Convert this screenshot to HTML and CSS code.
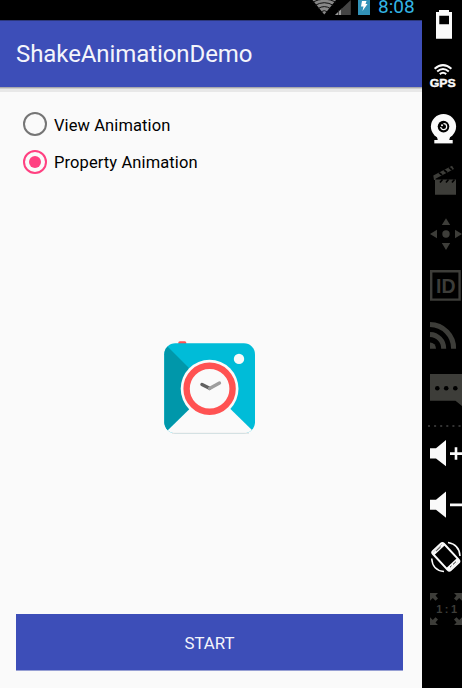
FILE: index.html
```
<!DOCTYPE html>
<html lang="en">
<head>
<meta charset="utf-8">
<title>ShakeAnimationDemo</title>
<link rel="stylesheet" href="styles.css">
</head>
<body>
<div class="emulator">
  <div class="screen">
    <div class="statusbar">
      <svg width="60" height="20" viewBox="312 0 60 20">
        <path d="M312.500 0H336L324.300 14.500Z" fill="#888"/>
        <g fill="none" stroke="#111" stroke-width="1"><path d="M312.500 2.200Q324.300-4 336 2.200M315 5.400Q324.300 0 333.500 5.400M318 8.600Q324.300 4.600 330.500 8.600M321 11.800Q324.300 9.500 327.500 11.800"/></g>
        <path d="M335 15L350.800 0V15Z" fill="#444"/>
        <path d="M335 15L342 8.400V15Z" fill="#999"/>
        <path d="M338.500 10V15M341.500 8V15" stroke="#222" stroke-width=".7"/>
        <path d="M358 0H370V15H358Z" fill="#3292b8"/>
        <path d="M362 1H366.500L365.500 4H367.500L362.500 11L363.500 6.500H361Z" fill="#fff"/>
      </svg>
      <span class="clock">8:08</span>
    </div>
    <header class="appbar"><h1>ShakeAnimationDemo</h1></header>
    <main class="content">
      <div class="radios">
        <div class="radio"><i class="ring"></i><span class="view">View Animation</span></div>
        <div class="radio"><i class="ring on"></i><span class="property">Property Animation</span></div>
      </div>
      <div class="picture">
        <svg width="94" height="96" viewBox="163 340 94 96">
          <defs><clipPath id="tile"><rect x="164.300" y="343.300" width="90.700" height="90" rx="11"/></clipPath></defs>
          <rect x="178.300" y="341.200" width="8" height="5" rx="1.500" fill="#ff5252"/>
          <g clip-path="url(#tile)">
            <path d="M164 343H256V434H164Z" fill="#00bcd8"/>
            <path d="M164 343L210 389L164 434Z" fill="#0097aa"/>
            <path d="M210 389V389L256 434H164Z" fill="#fafafa"/>
          </g>
          <path d="M172 433.300H249" stroke="#d9d9d9" stroke-width=".8"/>
          <circle cx="209.600" cy="388.700" r="28.900" fill="#fafafa"/>
          <circle cx="209.600" cy="388.700" r="23" fill="none" stroke="#ff5252" stroke-width="6.400"/>
          <path d="M202 384.500L209.500 388.300" stroke="#616161" stroke-width="3.500" stroke-linecap="round"/>
          <path d="M209.500 388.500L219.500 383" stroke="#9e9e9e" stroke-width="3.300" stroke-linecap="round"/>
          <circle cx="239" cy="358.900" r="5.200" fill="#fafafa"/>
        </svg>
      </div>
      <button class="start"><span>START</span></button>
    </main>
  </div>
  <aside class="tools">
    <svg width="40" height="50" viewBox="0 0 40 50"><path fill-rule="evenodd" d="M17 10H27V12H30V38.700H14V12H17ZM17.300 15.700V24.300H27V15.700Z"/></svg>
    <svg width="40" height="52" viewBox="0 50 40 52">
      <path class="line" stroke-width="2" d="M12.600 68.800Q21 61.500 29.400 68.800M15.200 71.500Q21 66.500 26.800 71.500M17.800 74.100Q21 71.500 24.200 74.100"/>
      <text x="7.800" y="87.300" class="gps" textLength="26" lengthAdjust="spacingAndGlyphs">GPS</text>
    </svg>
    <svg width="40" height="52" viewBox="0 102 40 52">
      <circle cx="21.500" cy="126.600" r="12.600"/><path d="M15 137H28L27 141H16Z"/><path d="M12.300 140H30.700V143.400H12.300Z"/>
      <circle cx="21.500" cy="126.600" r="5.800" fill="#000"/><path class="line" stroke-width="1.200" d="M18.700 127A3 3 0 1 0 21.500 123.600"/><circle cx="20" cy="125.200" r="1"/>
    </svg>
    <svg class="off" width="40" height="52" viewBox="0 154 40 52">
      <path d="M13 179.500H34V194.700H13ZM11.300 175.500L30 165.800L32 169L13.500 178.800V180H12Z"/>
      <path d="M17 172.600L20 175M22 170L25 172.500M27 167.300L30 170M18 182.500L20.500 179.500M24 182.500L26.500 179.500M30 182.500L32.500 179.500" stroke="#000" stroke-width="1.700"/>
    </svg>
    <svg class="off" width="40" height="54" viewBox="0 206 40 54"><circle cx="24" cy="234" r="3.700"/><path d="M24 218.300L28.200 225H19.800ZM24 250L28.200 243H19.800ZM8 234L15 229.800V238.200ZM40 234L33 229.800V238.200Z"/></svg>
    <svg class="off" width="40" height="50" viewBox="0 260 40 50"><path class="line" stroke-width="2.400" d="M9.200 271.200H37.600V299.600H9.200Z"/><text x="14" y="293.200" class="id" textLength="19.500" lengthAdjust="spacingAndGlyphs">ID</text></svg>
    <svg class="off" width="40" height="52" viewBox="0 310 40 52"><path d="M8 342.500A6 6 0 0 1 14 348.700H8Z"/><path class="line" stroke-width="5" d="M8 334.500A14 14 0 0 1 21.700 348.700M8 324.500A23.800 23.800 0 0 1 31.600 348.700"/></svg>
    <svg class="off" width="40" height="58" viewBox="0 362 40 58"><path d="M8 374H40V406L33.500 400.800H8Z"/><g fill="#000"><circle cx="15.300" cy="388.300" r="2.300"/><circle cx="24.200" cy="388.300" r="2.300"/><circle cx="33.300" cy="388.300" r="2.300"/></g></svg>
    <svg width="40" height="10" viewBox="0 420 40 10"><path d="M6 426H40" fill="none" stroke="#333" stroke-width="2" stroke-dasharray="2 4.100"/></svg>
    <svg width="40" height="50" viewBox="0 430 40 50"><path d="M8 448.300H14L24 440V466.300L14 458.400H8ZM28 452.300H40V455H28ZM32.700 447.300H35.300V459.700H32.700Z"/></svg>
    <svg width="40" height="50" viewBox="0 480 40 50"><path d="M8 499.700H14L24 491.400V517.700L14 509.800H8ZM28 503.400H40V506.300H28Z"/></svg>
    <svg width="40" height="53" viewBox="0 530 40 53">
      <g transform="translate(23.800 556.800) rotate(-43)"><rect x="-7.500" y="-13" width="15" height="26" rx="2.200" class="line" stroke-width="2"/><path d="M-7.500-10.800V-12H7.500V-9H-7.500ZM-7.500 8.500H7.500V12.500H-7.500Z"/><path d="M-3-10.800H3M-4 10.500H-2M0 10.500H4" stroke="#000" stroke-width=".8"/></g>
      <path class="line" stroke-width="1.500" d="M26 542.400Q37.500 544.500 38 556M9.700 558.500Q10.500 570.500 22 571.500"/>
    </svg>
    <svg class="off" width="40" height="105" viewBox="0 583 40 105">
      <path d="M8 593H16L13.500 595.500L16 598.500L13.500 600.800L10.800 598L8 600.800ZM40 593H32L34.500 595.500L32 598.500L34.500 600.800L37.200 598L40 600.800ZM8 625H16L13.500 622.500L16 619.500L13.500 617.200L10.800 620L8 617.200ZM40 625H32L34.500 622.500L32 619.500L34.500 617.200L37.200 620L40 617.200Z"/>
      <text class="ratio" y="612.900"><tspan x="14.200">1</tspan><tspan x="22.800">:</tspan><tspan x="29">1</tspan></text>
    </svg>
  </aside>
</div>
</body>
</html>
```
FILE: styles.css
```
* { box-sizing: border-box; }
body { margin: 0; background: #000; font-family: Roboto, sans-serif; }
.emulator { display: flex; width: 462px; height: 688px; overflow: hidden; }
.screen { width: 422px; display: flex; flex-direction: column; background: #fafafa; }
.statusbar { height: 20px; background: #000; display: flex; justify-content: flex-end; padding-right: 7px; gap: 6px; }
.clock { width: 37px; color: #33b5e5; font-size: 19px; line-height: 13px; letter-spacing: 0; white-space: nowrap; }
.appbar { height: 67px; flex: none; background: #3d4eb8; border-top: 1px solid #2c377c; display: flex; align-items: center; padding-left: 16px; box-shadow: 0 1px 0 #a9a9ad, 0 2px 0 #cdcdcd, 0 5px 0 #e8e8e8; }
h1 { margin: 0; color: #f4f5fb; font-size: 24px; font-weight: 400; line-height: 28px; letter-spacing: -0.08px; }
.content { flex: 1; display: flex; flex-direction: column; align-items: flex-start; padding: 18px 19px 17px 16px; }
.radios { padding-left: 7px; }
.radio { height: 38px; display: flex; align-items: center; gap: 7px; font-size: 16.5px; color: #000; white-space: nowrap; letter-spacing: 0.1px; }
.view { padding-top: 2px; }
.property { padding-top: 1px; }
.ring { width: 24px; height: 24px; border: 2.5px solid #757575; border-radius: 50%; display: grid; place-items: center; }
.ring.on { border-color: #ff4081; }
.ring.on::after { content: ""; width: 12px; height: 12px; border-radius: 50%; background: #ff4081; }
.picture { flex: 1; width: 100%; display: flex; justify-content: center; padding-top: 159px; }
.start { width: 387px; height: 57px; border: 0; border-bottom: 1px solid #98a0d4; background: #3d4eb8; color: #f4f5fb; font: 400 16.8px Roboto, sans-serif; padding: 2px 0 0; }
.tools { width: 40px; background: #000; display: flex; flex-direction: column; }
.tools svg { display: block; flex: none; fill: #fafafa; stroke: none; }
.tools .line { fill: none; stroke: #fafafa; }
.tools .off { fill: #3d3d39; }
.tools .off .line { stroke: #3d3d39; }
.gps { font: bold 11.5px "Liberation Sans", sans-serif; stroke: #fafafa; stroke-width: .4px; }
.id { font: bold 20.5px "Liberation Sans", sans-serif; }
.ratio { font: bold 11px "Liberation Sans", sans-serif; }
```
